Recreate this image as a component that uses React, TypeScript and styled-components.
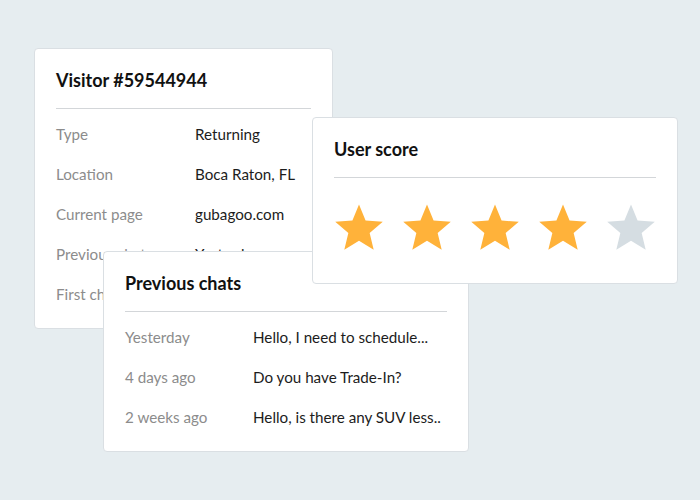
import React from "react";
import styled, { createGlobalStyle } from "styled-components";

const Global = createGlobalStyle`
  html, body { margin: 0; padding: 0; }
  body { background: #e6edf0; font-family: Lato, "Open Sans", sans-serif; }
`;

const Canvas = styled.div`
  position: relative;
  width: 700px;
  height: 500px;
  background: #e6edf0;
  overflow: hidden;
`;

const Card = styled.div<{ $x: number; $y: number; $w: number; $h: number; $z: number }>`
  position: absolute;
  left: ${(p) => p.$x}px;
  top: ${(p) => p.$y}px;
  width: ${(p) => p.$w}px;
  height: ${(p) => p.$h}px;
  z-index: ${(p) => p.$z};
  box-sizing: border-box;
  background: #ffffff;
  border: 1px solid #dadfe3;
  border-radius: 4px;
  padding: 20px 21px 0 21px;
  display: flex;
  flex-direction: column;
`;

const Title = styled.h2`
  margin: 0;
  font-family: Lato, sans-serif;
  font-weight: 700;
  font-size: 18px;
  line-height: 22px;
  color: #111111;
`;

const Divider = styled.div`
  height: 1px;
  background: #d3d6d9;
  margin-top: 17px;
`;

const Rows = styled.div`
  margin-top: 5px;
  display: flex;
  flex-direction: column;
`;

const Row = styled.div<{ $label: number }>`
  display: grid;
  grid-template-columns: ${(p) => p.$label}px 1fr;
  height: 40px;
  align-items: center;
  font-size: 15.2px;
  white-space: nowrap;
`;

const Label = styled.span`
  color: #8c8c8c;
`;

const Value = styled.span`
  color: #1c1c1c;
`;

const Stars = styled.div`
  margin-top: 26px;
  display: flex;
  gap: 20px;
  padding-left: 1px;
`;

const starPoints = (() => {
  const cx = 24, cy = 25.6, R = 25, r = 11.2;
  const pts: string[] = [];
  for (let i = 0; i < 10; i++) {
    const rad = i % 2 === 0 ? R : r;
    const a = -Math.PI / 2 + (i * Math.PI) / 5;
    pts.push(`${(cx + rad * Math.cos(a)).toFixed(2)},${(cy + rad * Math.sin(a)).toFixed(2)}`);
  }
  return pts.join(" ");
})();

const Star = ({ on }: { on: boolean }) => (
  <svg width="48" height="48" viewBox="0 0 48 48">
    <polygon points={starPoints} fill={on ? "#ffb23a" : "#d5dde2"} />
  </svg>
);

const visitor = [
  ["Type", "Returning"],
  ["Location", "Boca Raton, FL"],
  ["Current page", "gubagoo.com"],
  ["Previous chats", "Yesterday"],
  ["First chat", "2 weeks ago"],
];

const chats = [
  ["Yesterday", "Hello, I need to schedule..."],
  ["4 days ago", "Do you have Trade-In?"],
  ["2 weeks ago", "Hello, is there any SUV less.."],
];

export default function App() {
  return (
    <Canvas>
      <Global />
      <Card $x={34} $y={48} $w={299} $h={281} $z={1}>
        <Title>Visitor #59544944</Title>
        <Divider />
        <Rows>
          {visitor.map(([l, v]) => (
            <Row key={l} $label={139}>
              <Label>{l}</Label>
              <Value>{v}</Value>
            </Row>
          ))}
        </Rows>
      </Card>
      <Card $x={103} $y={251} $w={366} $h={201} $z={2}>
        <Title>Previous chats</Title>
        <Divider />
        <Rows>
          {chats.map(([l, v]) => (
            <Row key={l} $label={128}>
              <Label>{l}</Label>
              <Value>{v}</Value>
            </Row>
          ))}
        </Rows>
      </Card>
      <Card $x={312} $y={117} $w={366} $h={167} $z={3}>
        <Title>User score</Title>
        <Divider />
        <Stars>
          {[true, true, true, true, false].map((on, i) => (
            <Star key={i} on={on} />
          ))}
        </Stars>
      </Card>
    </Canvas>
  );
}
